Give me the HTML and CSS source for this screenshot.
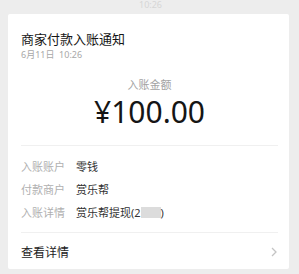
FILE: index.html
```html
<!DOCTYPE html>
<html lang="zh">
<head>
<meta charset="utf-8">
<link rel="stylesheet" href="styles.css">
</head>
<body>
<div class="stamp"><span>10:26</span></div>
<div class="card">
  <div class="head">
    <div class="title">商家付款入账通知</div>
    <div class="date">6月11日&nbsp;&nbsp;10:26</div>
  </div>
  <div class="amount-block">
    <div class="amount-label">入账金额</div>
    <div class="amount">¥100.00</div>
  </div>
  <div class="rows">
    <div class="row"><span class="label">入账账户</span><span class="value">零钱</span></div>
    <div class="row"><span class="label">付款商户</span><span class="value">赏乐帮</span></div>
    <div class="row"><span class="label">入账详情</span><span class="value">赏乐帮提现(2<span class="mask"></span>)</span></div>
  </div>
  <div class="footer">
    <span class="more">查看详情</span>
    <svg class="chev" width="6" height="10" viewBox="0 0 6 10"><path d="M1 1 L5 5 L1 9" fill="none" stroke="#c4c4c4" stroke-width="1.3"/></svg>
  </div>
</div>
</body>
</html>
```

FILE: styles.css
```css
html, body {
  margin: 0;
  padding: 0;
}
body {
  background: #ededed;
  font-family: "Noto Sans", "Noto Sans CJK SC", sans-serif;
  width: 299px;
  height: 274px;
  overflow: hidden;
}
.stamp {
  height: 14px;
  overflow: hidden;
  text-align: center;
  font-size: 9px;
  line-height: 10px;
  color: #d6d6d6;
}
.stamp span {
  display: inline-block;
  margin-top: -5px;
  margin-left: 2px;
}
.card {
  margin: 0 10px 0 8px;
  background: #fff;
  border-radius: 2px;
  height: 255px;
  display: flex;
  flex-direction: column;
}
.head {
  padding: 17px 13px 0;
}
.title {
  font-size: 13px;
  line-height: 17px;
  color: #161616;
}
.date {
  margin-top: 1px;
  font-size: 9px;
  line-height: 11px;
  color: #a8a8a8;
}
.amount-block {
  margin-top: 18px;
  text-align: center;
  padding-left: 2px;
}
.amount-label {
  font-size: 11px;
  line-height: 14px;
  color: #a3a3a3;
}
.amount {
  margin-top: 3px;
  font-size: 30px;
  line-height: 34px;
  color: #151515;
}
.rows {
  margin: 16px 11px 0 13px;
  border-top: 1px solid #f0f0f0;
  border-bottom: 1px solid #f0f0f0;
  padding: 9px 0 8px;
}
.row {
  display: flex;
  align-items: center;
  font-size: 11px;
  line-height: 23px;
  height: 23px;
}
.label {
  color: #b0b0b0;
  width: 55px;
}
.value {
  color: #333;
  display: inline-flex;
  align-items: center;
}
.mask {
  display: inline-block;
  width: 20px;
  height: 11px;
  background: #dcdcdc;
}
.footer {
  flex: 1;
  display: flex;
  align-items: center;
  justify-content: space-between;
  padding: 1px 12px 0 13px;
}
.more {
  font-size: 12px;
  color: #222;
}
.chev {
  display: block;
}
```
